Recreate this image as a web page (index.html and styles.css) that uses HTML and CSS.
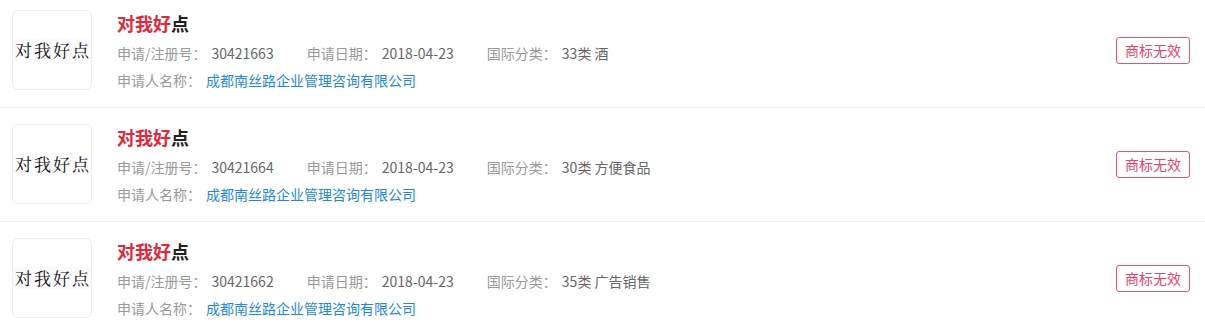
FILE: index.html
```html
<!DOCTYPE html>
<html lang="zh-CN">
<head>
  <meta charset="UTF-8">
  <title>商标查询结果</title>
  <link rel="stylesheet" href="styles.css">
</head>
<body>

  <ul class="tm-list">
    <li class="tm-item">
      <div class="tm-logo"><span>对我好点</span></div>
      <div class="tm-info">
        <h3 class="tm-name"><em>对我好</em>点</h3>
        <p class="tm-meta">
          <span class="field"><span class="label">申请/注册号：</span>30421663</span>
          <span class="field"><span class="label">申请日期：</span>2018-04-23</span>
          <span class="field"><span class="label">国际分类：</span>33类 酒</span>
        </p>
        <p class="tm-meta">
          <span class="label">申请人名称：</span><a href="#">成都南丝路企业管理咨询有限公司</a>
        </p>
      </div>
      <span class="tm-status">商标无效</span>
    </li>
    <li class="tm-item">
      <div class="tm-logo"><span>对我好点</span></div>
      <div class="tm-info">
        <h3 class="tm-name"><em>对我好</em>点</h3>
        <p class="tm-meta">
          <span class="field"><span class="label">申请/注册号：</span>30421664</span>
          <span class="field"><span class="label">申请日期：</span>2018-04-23</span>
          <span class="field"><span class="label">国际分类：</span>30类 方便食品</span>
        </p>
        <p class="tm-meta">
          <span class="label">申请人名称：</span><a href="#">成都南丝路企业管理咨询有限公司</a>
        </p>
      </div>
      <span class="tm-status">商标无效</span>
    </li>
    <li class="tm-item">
      <div class="tm-logo"><span>对我好点</span></div>
      <div class="tm-info">
        <h3 class="tm-name"><em>对我好</em>点</h3>
        <p class="tm-meta">
          <span class="field"><span class="label">申请/注册号：</span>30421662</span>
          <span class="field"><span class="label">申请日期：</span>2018-04-23</span>
          <span class="field"><span class="label">国际分类：</span>35类 广告销售</span>
        </p>
        <p class="tm-meta">
          <span class="label">申请人名称：</span><a href="#">成都南丝路企业管理咨询有限公司</a>
        </p>
      </div>
      <span class="tm-status">商标无效</span>
    </li>
  </ul>

</body>
</html>
```

FILE: styles.css
```css
* { box-sizing: border-box; }
body {
  margin: 0;
  background: #fff;
  font-family: "Noto Sans CJK SC", "Microsoft YaHei", sans-serif;
  color: #666;
}
.tm-list {
  list-style: none;
  margin: -6px 0 0 0;
  padding: 0;
}
.tm-item {
  display: flex;
  align-items: flex-start;
  padding: 16px 15px 13px 12px;
  border-bottom: 1px solid #eee;
}
.tm-logo {
  width: 80px;
  height: 80px;
  flex-shrink: 0;
  border: 1px solid #eee;
  border-radius: 6px;
  display: flex;
  align-items: center;
  justify-content: center;
  overflow: hidden;
}
.tm-logo span {
  display: block;
  width: 78px;
  background: #fbfbfd;
  text-align: center;
  white-space: nowrap;
  text-indent: 2px;
  font-family: "Noto Serif CJK SC", "Noto Sans CJK SC", serif;
  font-size: 17px;
  letter-spacing: 2px;
  line-height: 22px;
  color: #111;
}
.tm-info {
  flex: 1;
  margin-left: 25px;
}
.tm-name {
  margin: 0;
  font-size: 18px;
  line-height: 26px;
  font-weight: bold;
  color: #222;
}
.tm-name em {
  font-style: normal;
  color: #e4283c;
}
.tm-meta {
  margin: 0;
  font-size: 14px;
  line-height: 27px;
  color: #666;
  white-space: nowrap;
}
.tm-name + .tm-meta {
  margin-top: 4px;
}
.field {
  margin-right: 30px;
}
.label {
  color: #999;
  margin-right: 5px;
}
.tm-meta a {
  color: #1e88e5;
  text-decoration: none;
}
.tm-status {
  margin-top: 27px;
  padding: 0 8px;
  height: 27px;
  line-height: 25px;
  border: 1px solid #f5506a;
  border-radius: 3px;
  color: #ee4166;
  font-size: 14px;
}
```
